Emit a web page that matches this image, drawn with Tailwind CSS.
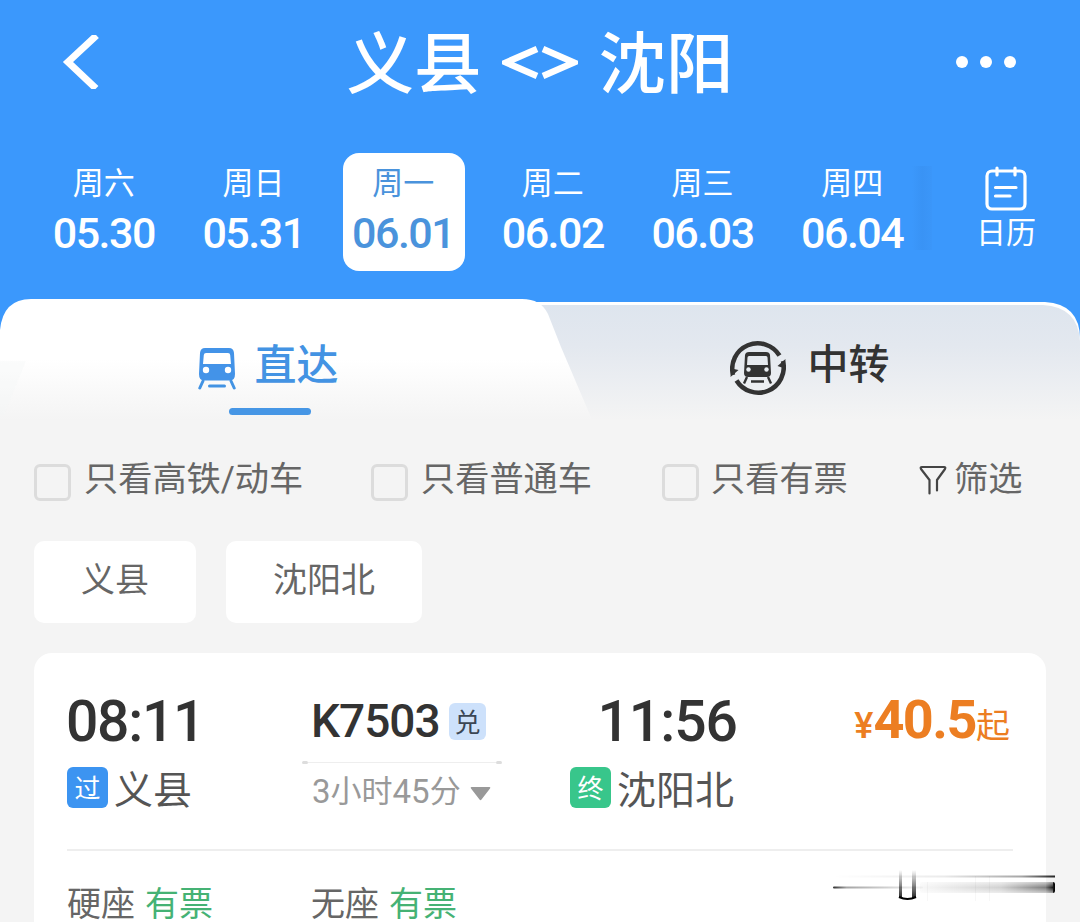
<!DOCTYPE html>
<html lang="zh-CN">
<head>
  <meta charset="UTF-8" />
  <meta name="viewport" content="width=device-width, initial-scale=1.0" />
  <title>义县 - 沈阳</title>
  <script src="https://cdn.jsdelivr.net/npm/@tailwindcss/browser@4"></script>
</head>
<body class="bg-[#f4f4f4] font-['Roboto','Noto_Sans_CJK_SC',sans-serif] text-[#666] leading-none h-[922px] overflow-hidden whitespace-nowrap">

  <!-- 顶部 -->
  <header class="bg-[#3b98fc] h-[350px]">
    <div class="flex items-center justify-between h-[124px] pl-[62px] pr-[64px]">
      <svg class="w-[38px] h-[54px]" viewBox="0 0 38 54" fill="none" stroke="#fff" stroke-width="7">
        <path d="M34.500 0.500L6 27L34 53.500" />
      </svg>
      <h1 class="flex items-center text-white font-medium text-[67.500px] ml-[24px]">
        <span class="pt-[5px]">义县</span>
        <svg class="w-[76px] h-[36px] ml-[20px] mr-[21px] mt-[2px]" viewBox="0 0 76 36" fill="none" stroke="#fff" stroke-width="6.500">
          <path d="M35 4L4 17.500L35 31M41 4L72 17.500L41 31" />
        </svg>
        <span class="pt-[5px]">沈阳</span>
      </h1>
      <div class="flex gap-3">
        <i class="size-3 rounded-full bg-white"></i>
        <i class="size-3 rounded-full bg-white"></i>
        <i class="size-3 rounded-full bg-white"></i>
      </div>
    </div>

    <!-- 日期 -->
    <div class="flex pt-[29px] pl-[30px] text-white">
      <div id="days" class="grid grid-cols-6 w-[898px]">
        <div class="flex justify-center"><div class="w-[122px] h-[118px] rounded-2xl pt-[15px] pr-[2px] flex flex-col items-center"><span class="text-[31px]">周六</span><b class="font-medium text-[43px] tracking-[-1.500px] mt-[13px]">05.30</b></div></div>
        <div class="flex justify-center"><div class="w-[122px] h-[118px] rounded-2xl pt-[15px] pr-[2px] flex flex-col items-center"><span class="text-[31px]">周日</span><b class="font-medium text-[43px] tracking-[-1.500px] mt-[13px]">05.31</b></div></div>
        <div class="flex justify-center"><div class="w-[122px] h-[118px] rounded-2xl pt-[15px] pr-[2px] flex flex-col items-center bg-white text-[#4a93dc]"><span class="text-[31px]">周一</span><b class="font-medium text-[43px] tracking-[-1.500px] mt-[13px]">06.01</b></div></div>
        <div class="flex justify-center"><div class="w-[122px] h-[118px] rounded-2xl pt-[15px] pr-[2px] flex flex-col items-center"><span class="text-[31px]">周二</span><b class="font-medium text-[43px] tracking-[-1.500px] mt-[13px]">06.02</b></div></div>
        <div class="flex justify-center"><div class="w-[122px] h-[118px] rounded-2xl pt-[15px] pr-[2px] flex flex-col items-center"><span class="text-[31px]">周三</span><b class="font-medium text-[43px] tracking-[-1.500px] mt-[13px]">06.03</b></div></div>
        <div class="flex justify-center"><div class="w-[122px] h-[118px] rounded-2xl pt-[15px] pr-[2px] flex flex-col items-center"><span class="text-[31px]">周四</span><b class="font-medium text-[43px] tracking-[-1.500px] mt-[13px]">06.04</b></div></div>
      </div>
      <div class="w-[20px] h-[84px] mt-[13px] -ml-[16px] bg-linear-to-r from-[#3b98fc] via-[#3993f5] to-[#3b96f9]"></div>
      <div class="flex flex-col items-center pt-[13px] w-[148px]">
        <svg class="w-[42px] h-[46px]" viewBox="0 0 42 46" fill="none" stroke="#fff" stroke-width="3.200" stroke-linecap="round">
          <rect x="2" y="5" width="38" height="38" rx="5" />
          <path d="M12 2V9M30 2V9M10.500 21.500H31M10.500 30H25" />
        </svg>
        <span class="text-[30px] mt-[6px]">日历</span>
      </div>
    </div>
  </header>

  <!-- 直达 / 中转 -->
  <nav class="relative h-[121px] -mt-[51px]">
    <svg class="absolute left-0 top-0 w-full h-full" viewBox="0 0 1080 121" fill="none">
      <defs>
        <linearGradient id="tabOn" x1="0" y1="0" x2="0" y2="1">
          <stop offset="0.500" stop-color="#fff" />
          <stop offset="1" stop-color="#f4f4f4" />
        </linearGradient>
        <linearGradient id="tabOff" x1="0" y1="0" x2="0" y2="1">
          <stop offset="0" stop-color="#dee5ee" />
          <stop offset="0.350" stop-color="#e3e8ef" />
          <stop offset="1" stop-color="#f4f4f4" />
        </linearGradient>
      </defs>
      <path d="M500 3H1045Q1080 5 1080 40V121H500Z" fill="#fff" />
      <path d="M500 6H1043Q1078 8 1080 42V121H500Z" fill="url(#tabOff)" />
      <path d="M0 31V121H592L590 116L561 48L548 15Q541 0 522 0H31Q3 0 0 31Z" fill="url(#tabOn)" />
      <path d="M26 62L4 116H0V62Z" fill="#f4f5f7" fill-opacity="0.350" />
    </svg>
    <div class="relative grid grid-cols-2">
      <div class="flex flex-col items-center text-[#4393e3]">
        <div class="flex items-center h-[109px] pt-[24px] pr-[3px]">
          <svg class="w-[38px] h-[42px] mt-[7px] mr-[18px]" viewBox="0 0 38 42" fill="#4393e8">
            <path fill-rule="evenodd" d="M7 0H31Q35.500 0 36 5L37 26Q37 32.500 32 32.500H6Q1 32.500 1 26L2 5Q2.500 0 7 0ZM8 5Q6 5 5.800 7L5 16H33L32.200 7Q32 5 30 5Z" />
            <circle cx="8" cy="22" r="3.200" fill="#fff" />
            <circle cx="30" cy="22" r="3.200" fill="#fff" />
            <path d="M5 33L1.800 40M33 33L36.200 40M11.500 38H26.500" fill="none" stroke="#4393e3" stroke-width="3" stroke-linecap="round" />
          </svg>
          <span class="text-[42px] font-medium">直达</span>
        </div>
        <i class="w-[82px] h-[7px] rounded-full bg-[#4696e5]"></i>
      </div>
      <div class="flex items-center justify-center h-[109px] pt-[24px] pr-[1px] text-[#333]">
        <svg class="w-[56px] h-[56px] mt-[4px] mr-[22px]" viewBox="0 0 56 56">
          <path d="M3 35A25.500 25.500 0 0 1 49.500 15.500M53 21A25.500 25.500 0 0 1 6.500 40.500" fill="none" stroke="#333" stroke-width="4.500" />
          <path d="M0.500 37L1.500 28.500L8.500 30ZM55.500 19L54.500 28.500L47.500 26Z" fill="#333" />
          <path fill-rule="evenodd" d="M19 12H36Q39.500 12 40 15L41 33Q41 37 37 37H18Q14 37 14 33L15 15Q15.500 12 19 12ZM19 16Q17.500 16 17.500 17.500L17 25H38L37.500 17.500Q37.500 16 36 16Z" fill="#333" />
          <circle cx="18.500" cy="29.500" r="2.200" fill="#e9edf1" />
          <circle cx="36.500" cy="29.500" r="2.200" fill="#e9edf1" />
          <path d="M17 37L14 43.500M38 37L41 43.500M21 41.500H34" stroke="#333" stroke-width="2.400" />
        </svg>
        <span class="text-[41px] font-medium">中转</span>
      </div>
    </div>
  </nav>

  <!-- 筛选 -->
  <div class="flex items-center h-[116px] pt-[2px] pl-[34px] text-[34.200px]">
    <i class="size-[37px] rounded-md border-[3px] border-[#dcdcdc] mt-[6px] mr-[13px]"></i>
    <span class="w-[287px]">只看高铁/动车</span>
    <i class="size-[37px] rounded-md border-[3px] border-[#dcdcdc] mt-[6px] mr-[13px]"></i>
    <span class="w-[241px]">只看普通车</span>
    <i class="size-[37px] rounded-md border-[3px] border-[#dcdcdc] mt-[6px] mr-[12px]"></i>
    <span class="w-[208px]">只看有票</span>
    <svg class="w-[28px] h-[30px] mt-[2px] mr-[7px]" viewBox="0 0 28 30" fill="none" stroke="#444" stroke-width="2.200" stroke-linejoin="round" stroke-linecap="round">
      <path d="M10.500 28.500V15L2 4Q1 2 3 2H25Q27 2 26 4L18 15V25.500" />
    </svg>
    <span>筛选</span>
  </div>

  <!-- 车站 -->
  <div class="flex gap-[30px] mt-[5px] pl-[34px] text-[34px]">
    <div class="w-[162px] h-[82px] rounded-[10px] bg-white flex items-center justify-center pb-[4px]">义县</div>
    <div class="w-[196px] h-[82px] rounded-[10px] bg-white flex items-center justify-center pb-[4px]">沈阳北</div>
  </div>

  <!-- 车次 -->
  <main class="mx-[34px] mt-[30px] px-[33px] h-[300px] rounded-t-[18px] bg-white">
    <div class="grid grid-cols-[245px_258px_1fr_auto] h-[198px] border-b-2 border-[#eee] pt-[40px]">
      <div>
        <div class="h-[56px] flex items-center text-[57px] font-medium text-[#333] tracking-[-1.300px] -ml-[1px]">08:11</div>
        <div class="flex items-center mt-[18px] text-[39px] text-[#555]">
          <b class="size-[41px] rounded-md bg-[#3c94f1] text-white text-[26px] font-normal flex items-center justify-center -mt-[3px] pt-[2px] mr-[6px]">过</b>
          <span class="pt-[5px]">义县</span>
        </div>
      </div>
      <div>
        <div class="flex items-center h-[56px] text-[#333]">
          <span class="text-[46px] font-medium tracking-[-1px] w-[137px] indent-[-1px]">K7503</span>
          <b class="size-[37px] rounded-md bg-[#cde1fb] text-[26px] text-[#3b4654] font-normal flex items-center justify-center pt-[3px]">兑</b>
        </div>
        <div class="flex items-center -ml-[10px] mt-[12px] w-[200px]">
          <i class="w-[6px] h-[3px] rounded-full bg-[#ddd]"></i>
          <i class="flex-1 h-px bg-[#eee]"></i>
          <i class="w-[6px] h-[3px] rounded-full bg-[#ddd]"></i>
        </div>
        <div class="flex items-center text-[31px] text-[#999] mt-[11px]">
          <span class="text-[33px]">3</span>
          <span>小时</span>
          <span class="text-[33px]">45</span>
          <span>分</span>
          <svg class="w-[21px] h-[14px] ml-[9px] mt-[5px]" viewBox="0 0 21 14" fill="#999"><path d="M1.500 0H19.500Q21 0 20 1.500L11.500 12.500Q10.500 14 9.500 12.500L1 1.500Q0 0 1.500 0Z" /></svg>
        </div>
      </div>
      <div>
        <div class="h-[56px] w-[167px] flex items-center justify-end text-[57px] font-medium text-[#333] tracking-[-1px]">11:56</div>
        <div class="flex items-center mt-[18px] text-[39px] text-[#555]">
          <b class="size-[41px] rounded-md bg-[#38c68b] text-white text-[26px] font-normal flex items-center justify-center -mt-[3px] pt-[2px] mr-[6px]">终</b>
          <span class="pt-[5px]">沈阳北</span>
        </div>
      </div>
      <div class="flex items-baseline text-[#ec7e22] pr-[3px]">
        <span class="text-[36px] font-medium">¥</span>
        <span class="text-[54px] font-bold tracking-[-1.500px]">40.5</span>
        <span class="text-[34px]">起</span>
      </div>
    </div>
    <div class="grid grid-cols-[244px_1fr] pt-[36px] text-[34px]">
      <div class="flex gap-[10px]"><span>硬座</span><span class="text-[#45b274]">有票</span></div>
      <div class="flex gap-[10px]"><span>无座</span><span class="text-[#45b274]">有票</span></div>
    </div>
  </main>

  <!-- 右下角条纹 -->
  <svg class="absolute left-[830px] top-[864px] w-[230px] h-[40px]" viewBox="0 0 230 40">
    <defs>
      <linearGradient id="h1"><stop offset="0" stop-color="#000" stop-opacity="0" /><stop offset="0.500" stop-color="#000" stop-opacity="0.080" /><stop offset="0.850" stop-color="#000" stop-opacity="0.350" /><stop offset="1" stop-color="#000" stop-opacity="0.850" /></linearGradient>
      <linearGradient id="h2"><stop offset="0" stop-color="#000" stop-opacity="0.030" /><stop offset="0.600" stop-color="#000" stop-opacity="0.180" /><stop offset="0.930" stop-color="#000" stop-opacity="0.500" /><stop offset="1" stop-color="#000" /></linearGradient>
      <linearGradient id="h3"><stop offset="0" stop-color="#000" stop-opacity="0.800" /><stop offset="0.150" stop-color="#000" stop-opacity="0.350" /><stop offset="1" stop-color="#000" stop-opacity="0.030" /></linearGradient>
      <linearGradient id="v1" x1="0" y1="0" x2="0" y2="1"><stop offset="0" stop-color="#000" stop-opacity="0" /><stop offset="1" stop-color="#000" stop-opacity="0.850" /></linearGradient>
      <linearGradient id="soft" x1="0" y1="0" x2="0" y2="1"><stop offset="0" stop-color="#fff" stop-opacity="0.600" /><stop offset="0.500" stop-color="#fff" stop-opacity="0" /><stop offset="1" stop-color="#fff" stop-opacity="0.600" /></linearGradient>
    </defs>
    <rect x="3" y="11.500" width="222" height="2" fill="url(#h1)" />
    <rect x="90" y="18" width="135" height="11" rx="2" fill="url(#h2)" />
    <rect x="90" y="18" width="133" height="11" fill="url(#soft)" />
    <rect x="3" y="22.500" width="90" height="2" rx="1" fill="url(#h3)" />
    <rect x="69" y="6" width="3" height="28" fill="url(#v1)" />
    <rect x="82" y="6" width="4" height="28" fill="url(#v1)" />
    <path d="M69 33Q77.500 37 86 33" fill="none" stroke="#000" stroke-width="2.200" />
    <path d="M97.500 18V37M145.500 12V37M159.500 12V37" stroke="#000" stroke-opacity="0.030" />
  </svg>

</body>
</html>
